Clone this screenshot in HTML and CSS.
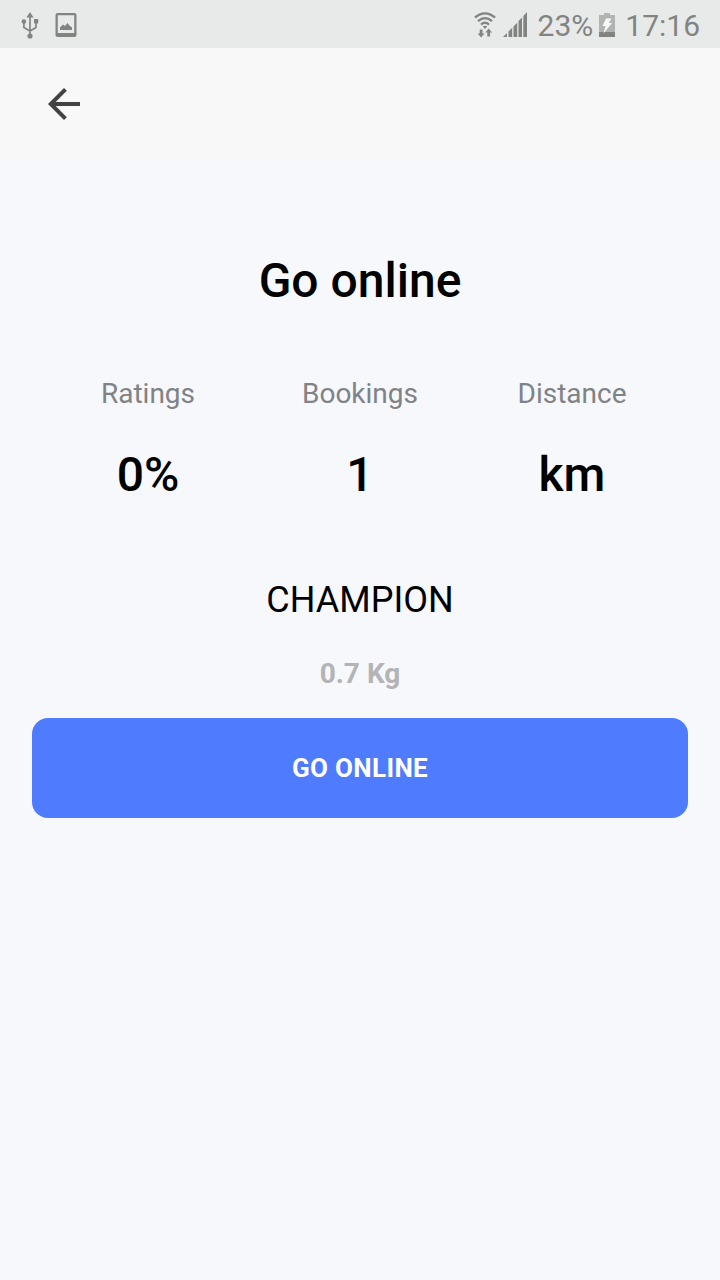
FILE: index.html
```html
<!DOCTYPE html>
<html lang="en">
<head>
<meta charset="utf-8">
<title>Go online</title>
<link rel="stylesheet" href="styles.css">
</head>
<body>
<div class="status-bar">
  <svg class="usb" width="18" height="28" viewBox="0 0 18 28" fill="none" stroke="#828482" stroke-width="1.7">
    <path d="M9 5v18M2.900 11v4.500L9 19M15 11v4.500L9 19"/>
    <g fill="#828482" stroke="none"><path d="M9 0l3.600 5.500H5.400z"/><circle cx="2.900" cy="9.500" r="2.300"/><path d="M13 7h4.200v4.400H13z"/><circle cx="9" cy="24" r="2.600"/></g>
  </svg>
  <svg class="image" width="22" height="24" viewBox="0 0 22 24">
    <path fill="#828482" fill-rule="evenodd" d="M2.500 0h17q2 0 2 2v20q0 2-2 2h-17q-2 0-2-2V2q0-2 2-2zM2.800 2.300v17.700h16.400V2.300z"/>
    <path fill="#828482" d="M5 17v-2.500l3-3 2 1.500 2.500-3 2 2.500 2.500 2V17z"/>
  </svg>
  <svg class="wifi" width="22" height="27" viewBox="0 0 22 27" fill="none" stroke="#828482" stroke-width="2.300">
    <path d="M1 5.500Q11-2.800 21 5.500M4 9.200Q11 3.100 18 9.200M7 12.600Q11 9 15 12.600"/>
    <path fill="#828482" stroke="none" d="M8.800 14.500Q11 13 13.200 14.500L11 17zM5.700 17.500h2.800v4h2L7.100 25.500 3.700 21.500h2zM14.700 16.500l3.400 4h-2v4h-2.800v-4h-2z"/>
  </svg>
  <svg class="signal" width="24" height="25" viewBox="0 0 24 25" fill="#828482">
    <path d="M0 25l4-4V25zM5.500 19.500l3.700-3.700V25H5.500zM10.500 14.500l3.700-3.700V25h-3.700zM15.500 9l3.500-3.500V25h-3.500zM20.300 4L24 0v25h-3.700z"/>
  </svg>
  <span class="percent">23%</span>
  <svg class="battery" width="16" height="24" viewBox="0 0 16 24">
    <path fill="#b2b4b2" d="M0 2h5V0h6v2h5v17H0z"/><path fill="#828482" d="M0 19h16v5H0z"/>
    <path fill="#f7f9f7" d="M7 5.500h5.500L9.700 10H13L4.500 20.500l2-7.500H3.500z"/>
  </svg>
  <span class="clock">17:16</span>
</div>
<header class="toolbar">
  <svg width="32" height="32" viewBox="0 0 32 32" fill="none" stroke="#424242" stroke-width="4">
    <path d="M32 16H3M17.400 1.400L2.800 16l14.600 14.600"/>
  </svg>
</header>
<main class="content">
  <h1 class="title">Go online</h1>
  <section class="stats">
    <div class="stat"><span class="label">Ratings</span><span class="value">0%</span></div>
    <div class="stat"><span class="label">Bookings</span><span class="value">1</span></div>
    <div class="stat"><span class="label">Distance</span><span class="value">km</span></div>
  </section>
  <p class="level">CHAMPION</p>
  <p class="weight">0.7 Kg</p>
  <button class="online-button" type="button">GO ONLINE</button>
</main>
</body>
</html>
```
FILE: styles.css
```css
* { box-sizing: border-box; }
body {
  margin: 0;
  min-height: 1280px;
  background: #f6f8fc;
  color: #000;
  font-family: Roboto, sans-serif;
}
svg { display: block; flex: none; }
.status-bar {
  display: flex;
  align-items: flex-start;
  height: 48px;
  padding: 0 20px 0 21px;
  background: #e8eae9;
  color: #828482;
  font-size: 30px;
  line-height: 36px;
}
.usb { margin-top: 12px; }
.image { margin: 13px 0 0 16px; }
.wifi { margin: 12px 0 0 auto; }
.signal { margin: 12px 0 0 7px; }
.percent { margin: 8px 0 0 11px; }
.battery { margin: 13px 0 0 6px; }
.clock { margin: 8px 0 0 10px; }
.toolbar {
  display: flex;
  align-items: center;
  height: 112px;
  padding: 0 48px;
  background: #f8f8f8;
}
.content {
  display: flex;
  flex-direction: column;
  padding: 93px 32px 0;
  text-align: center;
}
.title { margin: 0; font-size: 48px; font-weight: 500; line-height: 56px; }
.stats {
  display: grid;
  grid-template-columns: repeat(3, 1fr);
  margin-top: 69px;
  padding: 0 10px;
}
.stat { display: flex; flex-direction: column; gap: 37px; }
.label { color: #808285; font-size: 28px; line-height: 32px; }
.value { font-size: 48px; font-weight: 500; line-height: 56px; }
.level { margin: 76px 0 0; font-size: 36px; line-height: 42px; }
.weight { margin: 37px 0 28px; color: #b3b4b6; font-size: 28px; font-weight: 700; line-height: 32px; }
.online-button {
  height: 100px;
  border: 0;
  border-radius: 16px;
  background: #4f7cff;
  color: #fff;
  font: 700 26px/32px Roboto, sans-serif;
  letter-spacing: 0.35px;
}
```
